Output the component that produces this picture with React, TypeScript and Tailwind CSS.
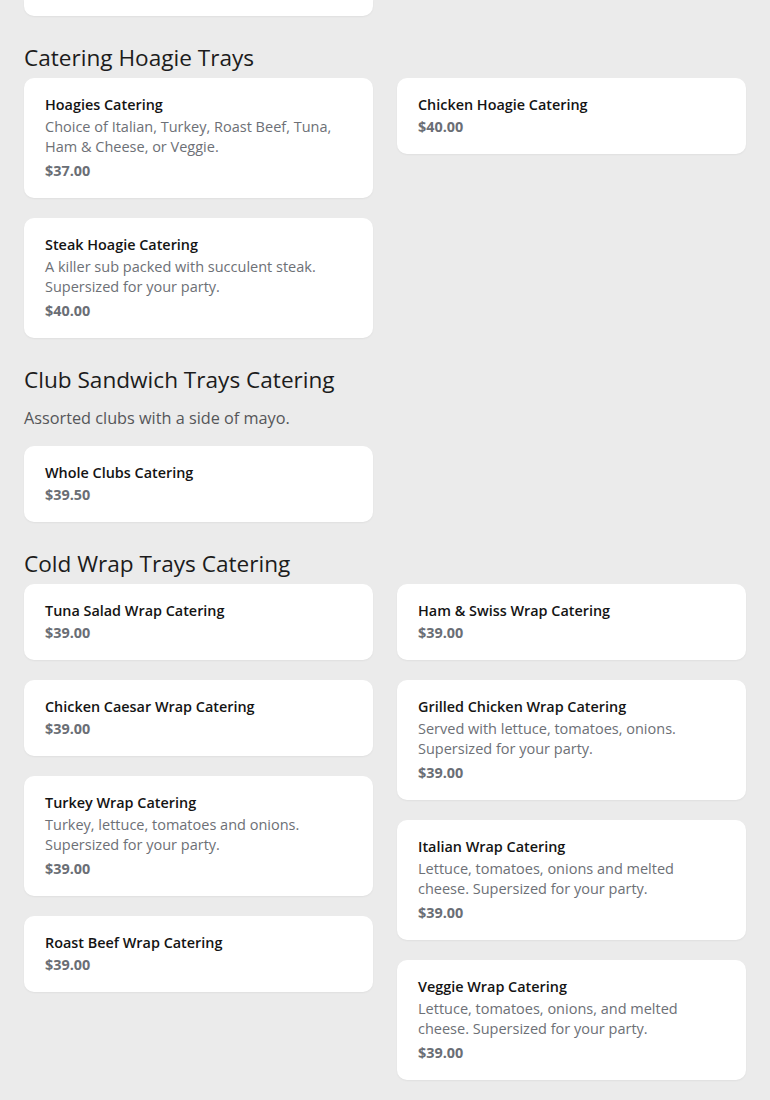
import React from "react";

type Item = { name: string; desc?: string; price: string };

function Card({ item }: { item: Item }) {
  return (
    <div className="bg-white rounded-[10px] pl-[21px] pr-5 pt-[17px] pb-[17px] shadow-[0_1px_2px_rgba(0,0,0,0.05)]">
      <div className="text-[14.4px] leading-5 font-semibold text-[#141414]">{item.name}</div>
      {item.desc && (
        <div className="pt-[2px] pb-[2px] text-[14.5px] leading-5 text-[#6d7076] pr-3">{item.desc}</div>
      )}
      <div className="pt-[2px] text-[14.4px] leading-5 font-bold text-[#6a6e75]">{item.price}</div>
    </div>
  );
}

function Section({
  title,
  desc,
  left,
  right,
}: {
  title: string;
  desc?: string;
  left: Item[];
  right: Item[];
}) {
  return (
    <section className="mt-[28px]">
      <h2 className="text-[22.6px] leading-[28px] font-normal text-[#1c1c1c]">{title}</h2>
      {desc && <p className="mt-3 text-[16.25px] leading-6 text-[#555659]">{desc}</p>}
      <div className={`grid grid-cols-2 gap-x-6 ${desc ? "mt-4" : "mt-[6px]"}`}>
        <div className="flex flex-col gap-5">
          {left.map((it) => (
            <Card key={it.name} item={it} />
          ))}
        </div>
        <div className="flex flex-col gap-5">
          {right.map((it) => (
            <Card key={it.name} item={it} />
          ))}
        </div>
      </div>
    </section>
  );
}

export default function App() {
  return (
    <div
      className="min-h-[1100px] bg-[#ebebeb] px-6 pb-10"
      style={{ fontFamily: '"Open Sans", "Noto Sans", Arial, sans-serif' }}
    >
      <div className="grid grid-cols-2 gap-x-6">
        <div className="h-4 bg-white rounded-b-[10px] shadow-[0_1px_2px_rgba(0,0,0,0.05)]" />
        <div />
      </div>
      <Section
        title="Catering Hoagie Trays"
        left={[
          {
            name: "Hoagies Catering",
            desc: "Choice of Italian, Turkey, Roast Beef, Tuna, Ham & Cheese, or Veggie.",
            price: "$37.00",
          },
          {
            name: "Steak Hoagie Catering",
            desc: "A killer sub packed with succulent steak. Supersized for your party.",
            price: "$40.00",
          },
        ]}
        right={[{ name: "Chicken Hoagie Catering", price: "$40.00" }]}
      />
      <Section
        title="Club Sandwich Trays Catering"
        desc="Assorted clubs with a side of mayo."
        left={[{ name: "Whole Clubs Catering", price: "$39.50" }]}
        right={[]}
      />
      <Section
        title="Cold Wrap Trays Catering"
        left={[
          { name: "Tuna Salad Wrap Catering", price: "$39.00" },
          { name: "Chicken Caesar Wrap Catering", price: "$39.00" },
          {
            name: "Turkey Wrap Catering",
            desc: "Turkey, lettuce, tomatoes and onions. Supersized for your party.",
            price: "$39.00",
          },
          { name: "Roast Beef Wrap Catering", price: "$39.00" },
        ]}
        right={[
          { name: "Ham & Swiss Wrap Catering", price: "$39.00" },
          {
            name: "Grilled Chicken Wrap Catering",
            desc: "Served with lettuce, tomatoes, onions. Supersized for your party.",
            price: "$39.00",
          },
          {
            name: "Italian Wrap Catering",
            desc: "Lettuce, tomatoes, onions and melted cheese. Supersized for your party.",
            price: "$39.00",
          },
          {
            name: "Veggie Wrap Catering",
            desc: "Lettuce, tomatoes, onions, and melted cheese. Supersized for your party.",
            price: "$39.00",
          },
        ]}
      />
    </div>
  );
}
